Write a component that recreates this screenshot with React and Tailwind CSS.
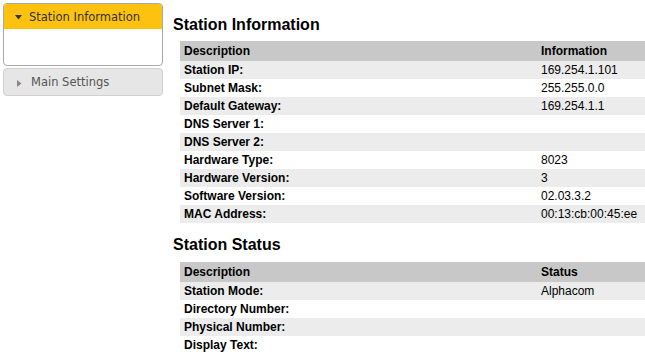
import React from "react";

const info = [
  ["Station IP:", "169.254.1.101"],
  ["Subnet Mask:", "255.255.0.0"],
  ["Default Gateway:", "169.254.1.1"],
  ["DNS Server 1:", ""],
  ["DNS Server 2:", ""],
  ["Hardware Type:", "8023"],
  ["Hardware Version:", "3"],
  ["Software Version:", "02.03.3.2"],
  ["MAC Address:", "00:13:cb:00:45:ee"],
];

const status = [
  ["Station Mode:", "Alphacom"],
  ["Directory Number:", ""],
  ["Physical Number:", ""],
  ["Display Text:", ""],
];

function Table({ head, rows }) {
  return (
    <div className="ml-[7px] text-[12px] text-black" style={{ fontFamily: '"Liberation Sans", Arial, sans-serif' }}>
      <div className="grid grid-cols-[357px_1fr] h-[20px] items-center bg-[#c8c8c8] font-bold">
        <div className="px-[4px]">Description</div>
        <div className="px-[4px]">{head}</div>
      </div>
      {rows.map(([k, v], i) => (
        <div
          key={k}
          className={
            "grid grid-cols-[357px_1fr] h-[18px] items-center " +
            (i % 2 === 0 ? "bg-[#ececec]" : "bg-white")
          }
        >
          <div className="px-[4px] font-bold">{k}</div>
          <div className="px-[4px]">{v}</div>
        </div>
      ))}
    </div>
  );
}

export default function App() {
  return (
    <div className="w-[645px] h-[357px] bg-white flex overflow-hidden">
      <div className="w-[160px] ml-[3px] mt-[3px] shrink-0 flex flex-col gap-[2px]" style={{ fontFamily: '"DejaVu Sans", Verdana, sans-serif' }}>
        <div className="h-[63px] border border-[#a8a8a8] rounded-[4px] overflow-hidden bg-white">
          <div className="h-[25px] bg-[#fdc20f] flex items-center pl-[11px] pt-[2px] text-[11.5px] text-[#333]">
            <svg width="7" height="5" viewBox="0 0 7 5" className="mr-[7px]">
              <polygon points="0,0 7,0 3.5,4.5" fill="#333" />
            </svg>
            Station Information
          </div>
        </div>
        <div className="h-[28px] border border-[#d0d0d0] rounded-[4px] bg-[#e6e6e6] flex items-center pl-[13px] pt-[2px] text-[11.5px] text-[#555]">
          <svg width="5" height="7" viewBox="0 0 5 7" className="mr-[9px]">
            <polygon points="0,0 4.5,3.5 0,7" fill="#888" />
          </svg>
          Main Settings
        </div>
      </div>
      <div className="flex-1 ml-[10px]" style={{ fontFamily: '"Liberation Sans", Arial, sans-serif' }}>
        <div className="h-[41px] flex items-end pb-[4px] text-[16px] font-bold text-black">Station Information</div>
        <Table head="Information" rows={info} />
        <div className="h-[39px] flex items-end pb-[5px] text-[16px] font-bold text-black">Station Status</div>
        <Table head="Status" rows={status} />
      </div>
    </div>
  );
}
